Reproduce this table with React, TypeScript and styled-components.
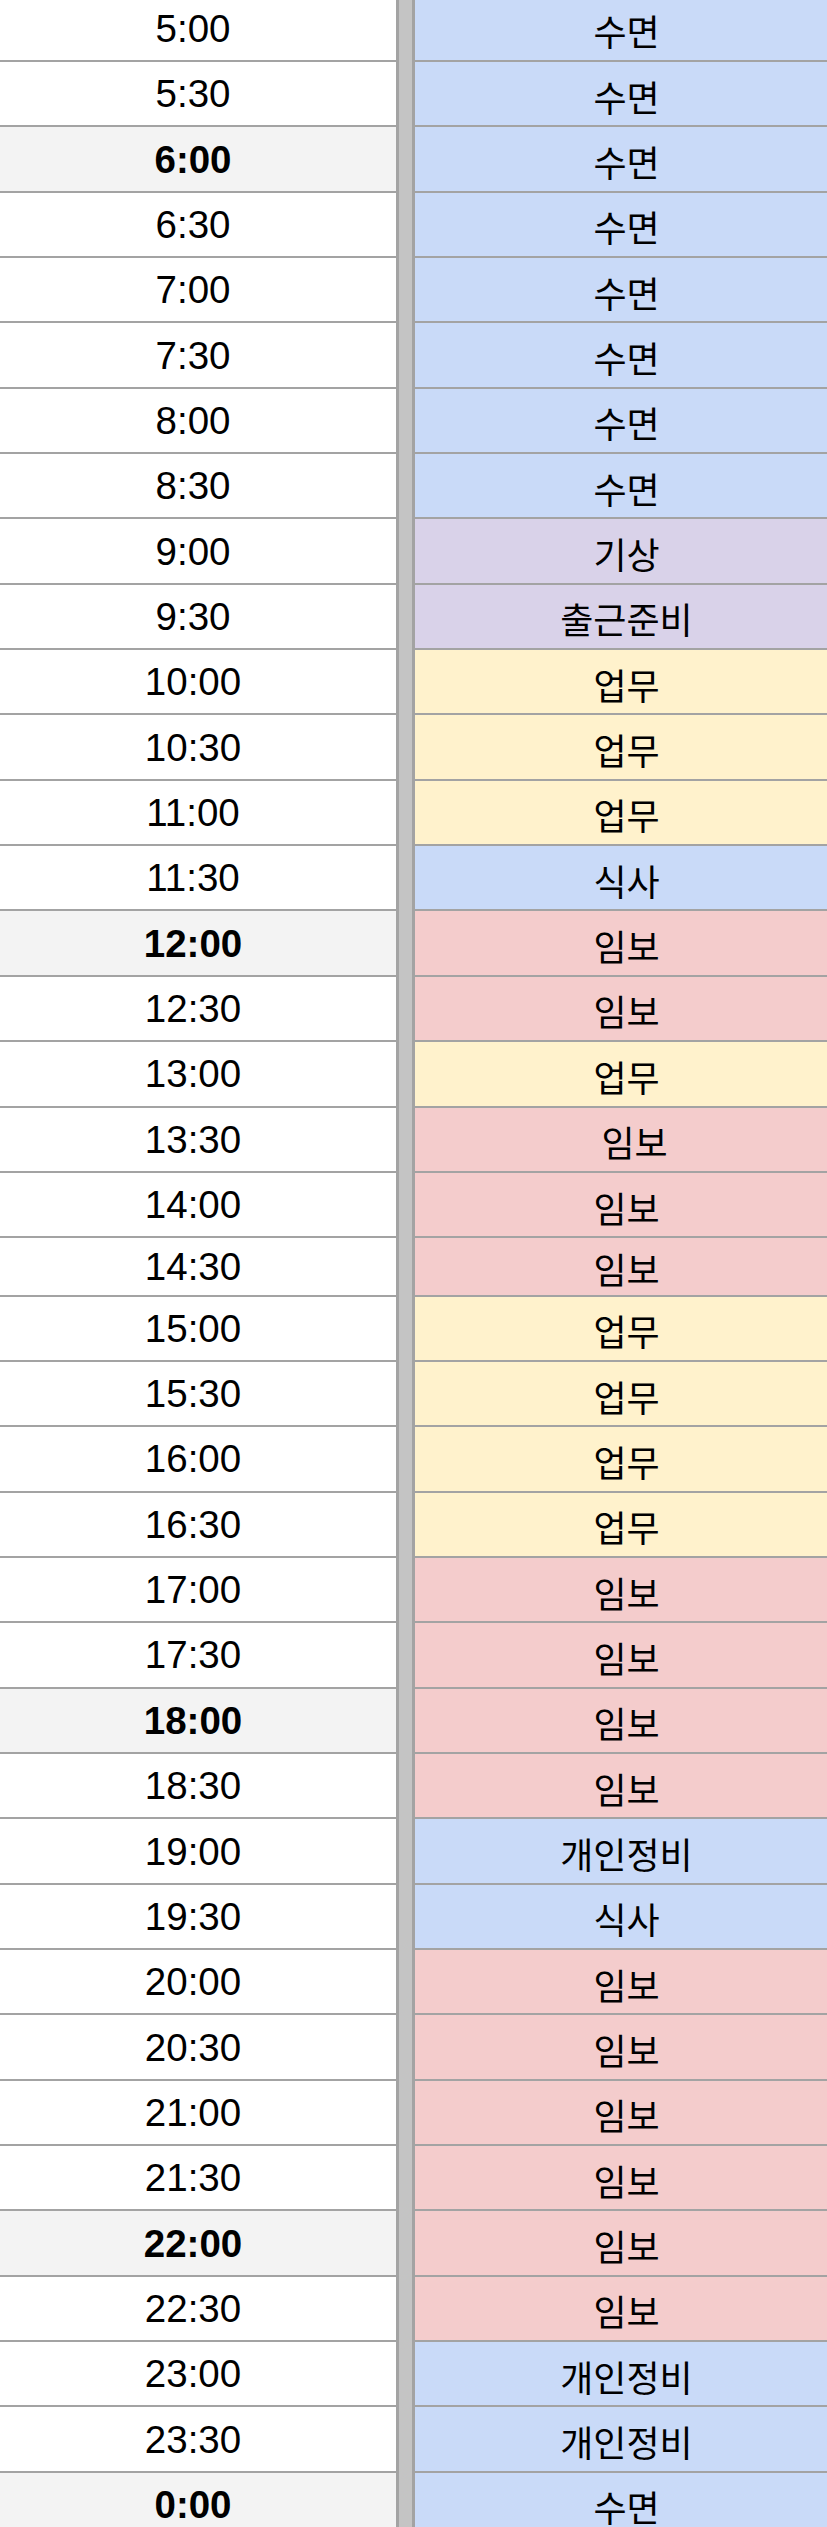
import React from 'react';
import styled, { createGlobalStyle } from 'styled-components';

const GlobalStyle = createGlobalStyle`
  html, body {
    margin: 0;
    padding: 0;
    background: #ffffff;
    overflow: hidden;
  }
`;

type Kind = 'sleep' | 'wake' | 'work' | 'foster';

const palette: Record<Kind, string> = {
  sleep: '#c9daf8',
  wake: '#d9d2e9',
  work: '#fff2cc',
  foster: '#f4cccc',
};

const Sheet = styled.div`
  width: 848px;
  margin-left: -10px;
  margin-top: -3.35px;
  display: flex;
  flex-direction: column;
  font-family: "Liberation Sans", "Noto Sans CJK KR", sans-serif;
  color: #000000;
`;

const Row = styled.div<{ $short?: boolean }>`
  display: grid;
  grid-template-columns: 406px 19px 1fr;
  height: ${(p) => (p.$short ? '58.4px' : '65.35px')};
`;

const TimeCell = styled.div<{ $hour?: boolean }>`
  display: flex;
  align-items: center;
  justify-content: center;
  box-sizing: border-box;
  padding-top: 1px;
  border-bottom: 2px solid #a3a3a3;
  background: ${(p) => (p.$hour ? '#f3f3f3' : '#ffffff')};
  font-size: 38.5px;
  font-weight: ${(p) => (p.$hour ? 700 : 400)};
`;

const Divider = styled.div`
  box-sizing: border-box;
  background: #c4c4c4;
  border-left: 3px solid #a3a3a3;
  border-right: 3px solid #a3a3a3;
`;

const TaskCell = styled.div<{ $kind: Kind }>`
  display: flex;
  align-items: center;
  justify-content: center;
  box-sizing: border-box;
  padding-top: 4px;
  border-bottom: 2px solid #a3a3a3;
  background: ${(p) => palette[p.$kind]};
  font-family: "Noto Sans CJK KR", "Liberation Sans", sans-serif;
  font-size: 36px;
  white-space: pre;
`;

type Slot = { time: string; task: string; kind: Kind; short?: boolean };

const slots: Slot[] = [
  { time: '5:00', task: '수면', kind: 'sleep' },
  { time: '5:30', task: '수면', kind: 'sleep' },
  { time: '6:00', task: '수면', kind: 'sleep' },
  { time: '6:30', task: '수면', kind: 'sleep' },
  { time: '7:00', task: '수면', kind: 'sleep' },
  { time: '7:30', task: '수면', kind: 'sleep' },
  { time: '8:00', task: '수면', kind: 'sleep' },
  { time: '8:30', task: '수면', kind: 'sleep' },
  { time: '9:00', task: '기상', kind: 'wake' },
  { time: '9:30', task: '출근준비', kind: 'wake' },
  { time: '10:00', task: '업무', kind: 'work' },
  { time: '10:30', task: '업무', kind: 'work' },
  { time: '11:00', task: '업무', kind: 'work' },
  { time: '11:30', task: '식사', kind: 'sleep' },
  { time: '12:00', task: '임보', kind: 'foster' },
  { time: '12:30', task: '임보', kind: 'foster' },
  { time: '13:00', task: '업무', kind: 'work' },
  { time: '13:30', task: '  임보', kind: 'foster' },
  { time: '14:00', task: '임보', kind: 'foster' },
  { time: '14:30', task: '임보', kind: 'foster', short: true },
  { time: '15:00', task: '업무', kind: 'work' },
  { time: '15:30', task: '업무', kind: 'work' },
  { time: '16:00', task: '업무', kind: 'work' },
  { time: '16:30', task: '업무', kind: 'work' },
  { time: '17:00', task: '임보', kind: 'foster' },
  { time: '17:30', task: '임보', kind: 'foster' },
  { time: '18:00', task: '임보', kind: 'foster' },
  { time: '18:30', task: '임보', kind: 'foster' },
  { time: '19:00', task: '개인정비', kind: 'sleep' },
  { time: '19:30', task: '식사', kind: 'sleep' },
  { time: '20:00', task: '임보', kind: 'foster' },
  { time: '20:30', task: '임보', kind: 'foster' },
  { time: '21:00', task: '임보', kind: 'foster' },
  { time: '21:30', task: '임보', kind: 'foster' },
  { time: '22:00', task: '임보', kind: 'foster' },
  { time: '22:30', task: '임보', kind: 'foster' },
  { time: '23:00', task: '개인정비', kind: 'sleep' },
  { time: '23:30', task: '개인정비', kind: 'sleep' },
  { time: '0:00', task: '수면', kind: 'sleep' },
];

// 강조 시간 (굵게 + 회색 배경)
const hourMarks = ['0:00', '6:00', '12:00', '18:00', '22:00'];

const App: React.FC = () => {
  return (
    <>
      <GlobalStyle />
      <Sheet>
        {slots.map((s) => (
          <Row key={s.time} $short={s.short}>
            <TimeCell $hour={hourMarks.includes(s.time)}>{s.time}</TimeCell>
            <Divider />
            <TaskCell $kind={s.kind}>{s.task}</TaskCell>
          </Row>
        ))}
      </Sheet>
    </>
  );
};

export default App;
